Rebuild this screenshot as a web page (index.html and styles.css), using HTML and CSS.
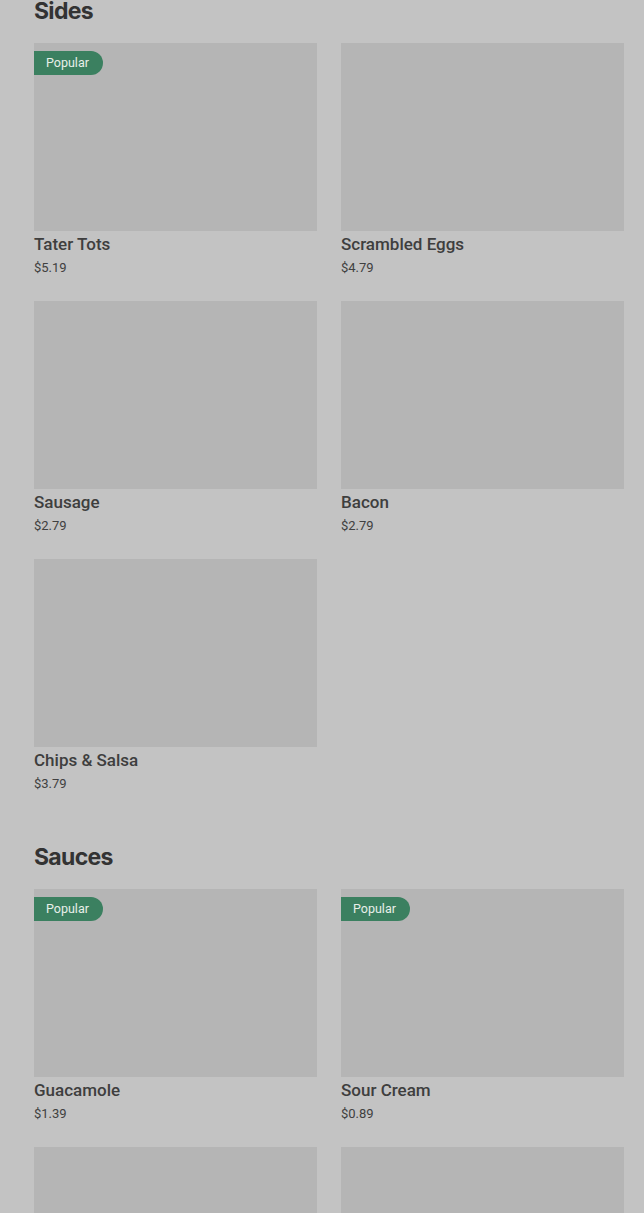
FILE: index.html
```html
<!DOCTYPE html>
<html lang="en">
<head>
    <meta charset="UTF-8">
    <meta name="viewport" content="width=device-width, initial-scale=1.0">
    <title>Menu</title>
    <link rel="stylesheet" href="styles.css">
</head>
<body>
    <div class="menu">
        <section class="category">
            <h2>Sides</h2>
            <div class="items">
                <div class="item">
                    <div class="photo"><span class="badge">Popular</span></div>
                    <div class="name">Tater Tots</div>
                    <div class="price">$5.19</div>
                </div>
                <div class="item">
                    <div class="photo"></div>
                    <div class="name">Scrambled Eggs</div>
                    <div class="price">$4.79</div>
                </div>
                <div class="item">
                    <div class="photo"></div>
                    <div class="name">Sausage</div>
                    <div class="price">$2.79</div>
                </div>
                <div class="item">
                    <div class="photo"></div>
                    <div class="name">Bacon</div>
                    <div class="price">$2.79</div>
                </div>
                <div class="item">
                    <div class="photo"></div>
                    <div class="name">Chips &amp; Salsa</div>
                    <div class="price">$3.79</div>
                </div>
            </div>
        </section>

        <section class="category">
            <h2>Sauces</h2>
            <div class="items">
                <div class="item">
                    <div class="photo"><span class="badge">Popular</span></div>
                    <div class="name">Guacamole</div>
                    <div class="price">$1.39</div>
                </div>
                <div class="item">
                    <div class="photo"><span class="badge">Popular</span></div>
                    <div class="name">Sour Cream</div>
                    <div class="price">$0.89</div>
                </div>
                <div class="item">
                    <div class="photo"></div>
                </div>
                <div class="item">
                    <div class="photo"></div>
                </div>
            </div>
        </section>
    </div>
</body>
</html>
```

FILE: styles.css
```css
* {
  margin: 0;
  padding: 0;
  box-sizing: border-box;
}
body {
  font-family: Roboto, "Liberation Sans", sans-serif;
  background-color: #c3c3c3;
  color: #383838;
}
.menu {
  margin-top: -5px; /* page is scrolled a little */
  padding: 0 20px 40px 34px;
}
.category + .category {
  margin-top: 48px;
}
.category h2 {
  font-family: Inter, "Liberation Sans", sans-serif;
  font-size: 23px;
  font-weight: 700;
  line-height: 32px;
  letter-spacing: -0.7px;
  color: #333;
  margin-bottom: 16px;
}
.items {
  display: grid;
  grid-template-columns: 1fr 1fr;
  gap: 24px;
}
.photo {
  position: relative;
  height: 188px;
  background-color: #b5b5b5;
}
.badge {
  position: absolute;
  top: 8px;
  left: 0;
  height: 24px;
  padding: 0 14px 0 12px;
  line-height: 24px;
  font-size: 12.5px;
  color: #e8efe9;
  background-color: #3b8060;
  border-radius: 0 12px 12px 0;
}
.name {
  margin-top: 2px;
  font-size: 17px;
  font-weight: 500;
  line-height: 22px;
  color: #3e3e3e;
}
.price {
  margin-top: 3px;
  font-size: 13px;
  line-height: 19px;
  color: #404040;
}
```
